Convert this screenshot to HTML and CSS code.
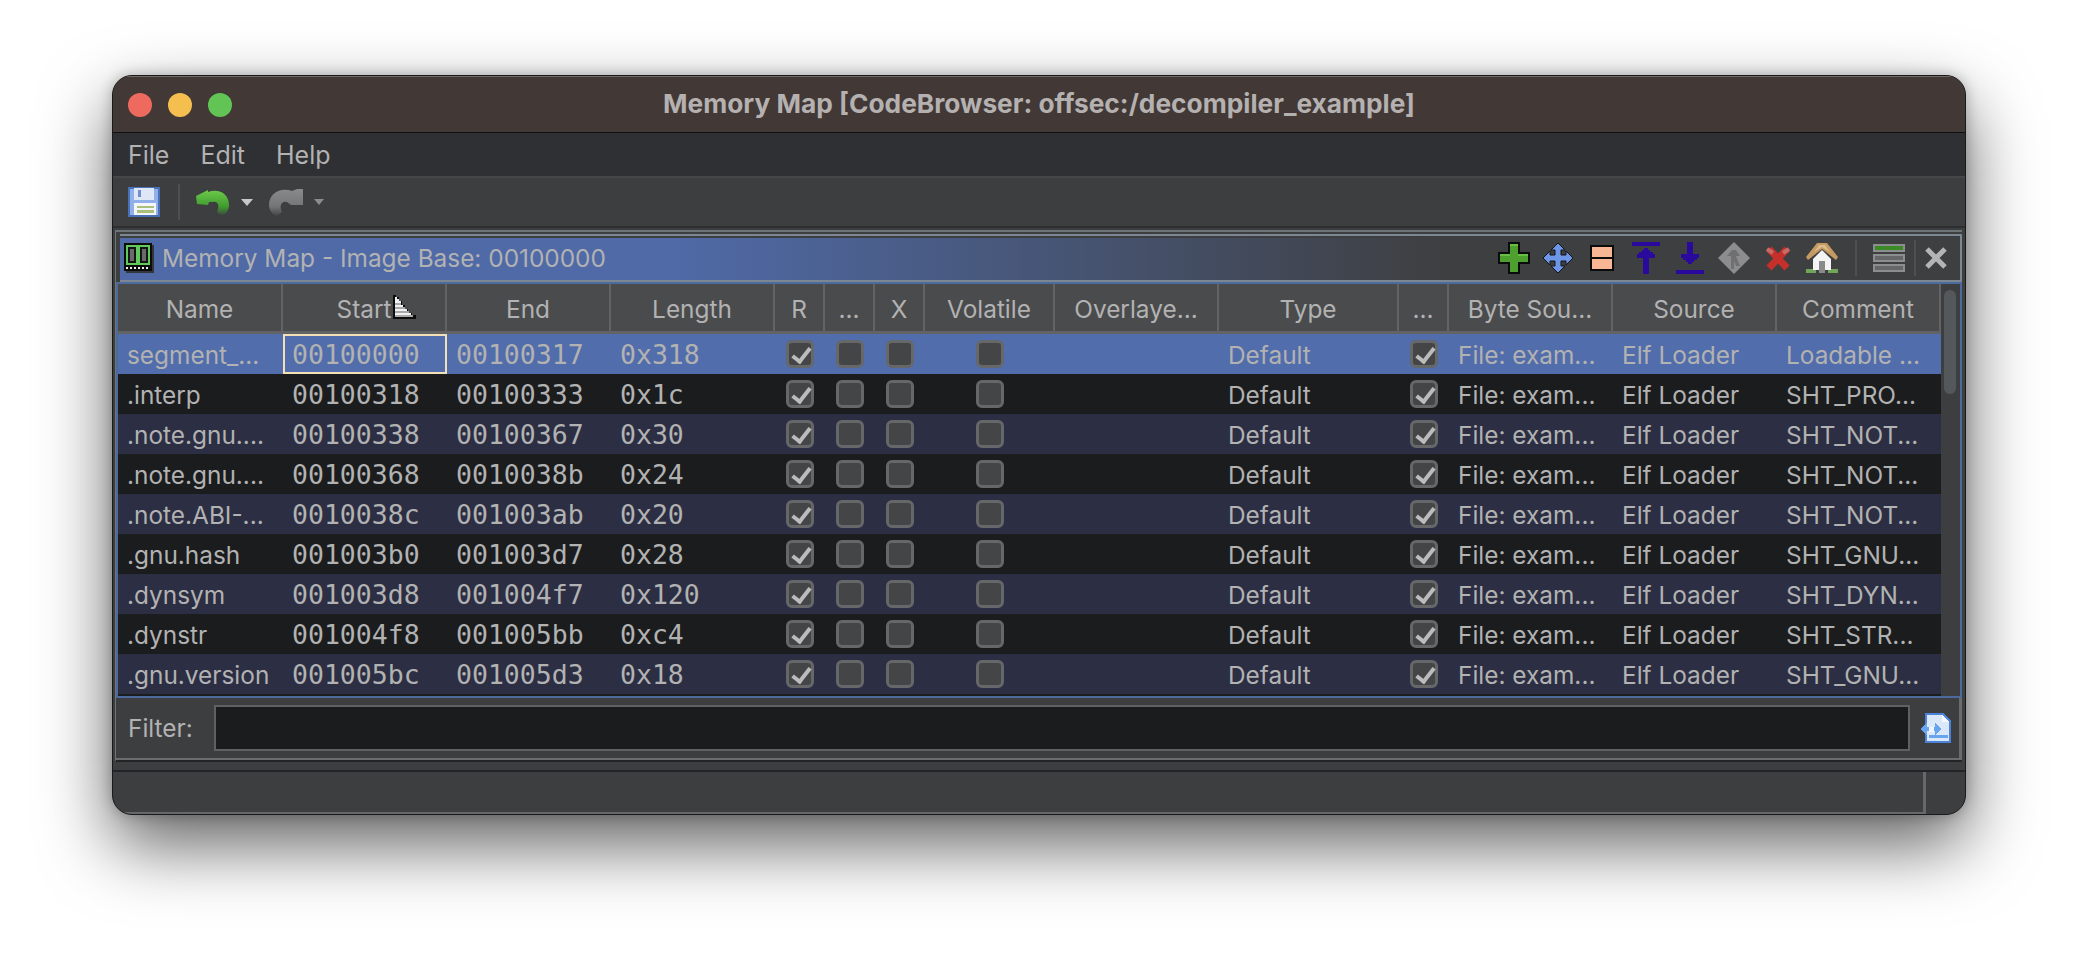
FILE: index.html
```html
<!DOCTYPE html>
<html lang="en">
<head>
    <meta charset="UTF-8">
    <title>Memory Map</title>
    <link rel="stylesheet" href="styles.css">
</head>
<body>

<div class="window">
    <div class="titlebar">
        <div class="lights">
            <span class="light red"></span>
            <span class="light yellow"></span>
            <span class="light green"></span>
        </div>
        <div class="title">Memory Map [CodeBrowser: offsec:/decompiler_example]</div>
    </div>

    <div class="menubar">
        <span>File</span>
        <span>Edit</span>
        <span>Help</span>
    </div>

    <div class="toolbar">
        <svg class="save-icon" width="32" height="30" viewBox="0 0 32 30" shape-rendering="crispEdges">
            <rect width="32" height="30" fill="#4a70b8"/>
            <rect x="2" y="2" width="28" height="26" fill="#8fb0e8"/>
            <rect x="6" y="1" width="20" height="12" fill="#dfe6f6"/>
            <rect x="10" y="3" width="3" height="7" fill="#6f8fce"/>
            <rect x="6" y="16" width="22" height="12" fill="#f4f6fa"/>
            <rect x="9" y="19" width="17" height="2" fill="#a8c07c"/>
            <rect x="9" y="23" width="17" height="3" fill="#a8c07c"/>
        </svg>
        <span class="tool-sep"></span>
        <svg class="undo-icon" width="34" height="28" viewBox="0 0 34 28">
            <defs>
                <linearGradient id="undoFade" x1="0" y1="0" x2="0" y2="1">
                    <stop offset="0" stop-color="#6ccb4a"/>
                    <stop offset="0.65" stop-color="#3f9a2f"/>
                    <stop offset="1" stop-color="#3d3e40"/>
                </linearGradient>
                <linearGradient id="redoFade" x1="0" y1="0" x2="0" y2="1">
                    <stop offset="0" stop-color="#8a8a8b"/>
                    <stop offset="0.65" stop-color="#747576"/>
                    <stop offset="1" stop-color="#434445"/>
                </linearGradient>
            </defs>
            <path d="M0 8 L12 2 L12 4 C22 0 33 5 33 17 C33 22 30 26 26 28 L21 24 C24 18 22 13 17 14 L13 14 L12 17 L1 16 Z" fill="url(#undoFade)"/>
        </svg>
        <span class="drop-arrow"></span>
        <svg class="redo-icon" width="34" height="28" viewBox="0 0 34 28">
            <path d="M34 1 L34 17 L22 17 L18 14 C12 13 10 18 13 24 L8 28 C3 26 0 22 0 17 C0 5 12 -1 23 3 L28 1 Z" fill="url(#redoFade)"/>
        </svg>
        <span class="drop-arrow dim"></span>
    </div>

    <div class="panel">
        <div class="panel-title">
            <svg class="chip-icon" width="30" height="30" viewBox="0 0 30 30" shape-rendering="crispEdges">
                <rect x="2" y="2" width="28" height="28" fill="#33363d"/>
                <rect width="28" height="28" fill="#0c0c0c"/>
                <rect x="2" y="2" width="24" height="20" fill="#62c95c"/>
                <rect x="4" y="4" width="8" height="16" fill="#151515"/>
                <rect x="16" y="4" width="8" height="16" fill="#151515"/>
                <rect x="6" y="6" width="4" height="12" fill="#6a6a6a"/>
                <rect x="18" y="6" width="4" height="12" fill="#6a6a6a"/>
                <path d="M2 24h2v2H2zM6 24h2v2H6zM10 24h2v2h-2zM14 24h2v2h-2zM18 24h2v2h-2zM22 24h2v2h-2z" fill="#eee"/>
            </svg>
            <span class="panel-name">Memory Map - Image Base: 00100000</span>
            <div class="panel-actions">
                <svg class="act" width="32" height="32" viewBox="0 0 16 16" shape-rendering="crispEdges">
                    <path d="M5 0h6v5h5v6h-5v5H5v-5H0V5h5z" fill="#0b0b0b"/>
                    <path d="M6 1h4v5h5v4h-5v5H6v-5H1V6h5z" fill="#4ea02e"/>
                    <path d="M6 1h4v1H6zM1 6h5v1H1zM10 6h5v1h-5z" fill="#68bd45"/>
                </svg>
                <svg class="act" width="32" height="32" viewBox="0 0 32 32">
                    <polygon points="16,1 23,8 19,8 19,13 24,13 24,9 31,16 24,23 24,19 19,19 19,24 23,24 16,31 9,24 13,24 13,19 8,19 8,23 1,16 8,9 8,13 13,13 13,8 9,8" fill="#6e96e6" stroke="#141418" stroke-width="1"/>
                </svg>
                <svg class="act" width="32" height="32" viewBox="0 0 32 32" shape-rendering="crispEdges">
                    <rect x="4" y="3" width="24" height="26" fill="#0b0b0b"/>
                    <rect x="6" y="5" width="20" height="10" fill="#f7b795"/>
                    <rect x="6" y="17" width="20" height="10" fill="#f7b795"/>
                </svg>
                <svg class="act" width="32" height="32" viewBox="0 0 32 32" shape-rendering="crispEdges">
                    <rect x="2" y="0" width="28" height="4" fill="#2a0a9c"/>
                    <path d="M14 6h4v2h2v2h3v2h2v4h-6v16h-6V16H7v-4h2v-2h3V8h2z" fill="#2a0a9c"/>
                </svg>
                <svg class="act" width="32" height="32" viewBox="0 0 32 32" shape-rendering="crispEdges">
                    <rect x="2" y="28" width="28" height="4" fill="#2a0a9c"/>
                    <path d="M13 0h6v12h6v4h-2v2h-3v2h-2v2h-4v-2h-2v-2H9v-2H7v-4h6z" fill="#2a0a9c"/>
                </svg>
                <svg class="act" width="32" height="32" viewBox="0 0 32 32">
                    <path d="M16 0L32 16L16 32L0 16Z" fill="#8d8d8e"/>
                    <path d="M14 8h4l4 6h-4l4 10h-4l-2-5v8h-3V14H9z" fill="#6f7071"/>
                </svg>
                <svg class="act" width="32" height="32" viewBox="0 0 32 32">
                    <path d="M7 7L25 26M25 7L7 26" stroke="#c5302a" stroke-width="7"/>
                    <path d="M5 7L11 11M27 7L21 11" stroke="#c86a66" stroke-width="4"/>
                </svg>
                <svg class="act" width="32" height="32" viewBox="0 0 32 32">
                    <path d="M0 27h10v4H0zM22 27h10v4H22z" fill="#6fa65a"/>
                    <path d="M16 8l9 9v11H7V17z" fill="#f4f4f4"/>
                    <rect x="13" y="19" width="6" height="12" fill="#8a8a8a"/>
                    <path d="M11 1h10l11 14-2 3-14-11L2 18l-2-3z" fill="#c49a62"/>
                    <path d="M13 3h6l5 7-8-5-8 5z" fill="#dcbc8c"/>
                </svg>
                <span class="act-sep"></span>
                <svg class="act-rows" width="32" height="28" viewBox="0 0 32 28" shape-rendering="crispEdges">
                    <rect x="1" y="1" width="30" height="6" fill="#3a8a26" stroke="#8c8d8e" stroke-width="2"/>
                    <rect x="1" y="11" width="30" height="6" fill="#666769" stroke="#8c8d8e" stroke-width="2"/>
                    <rect x="1" y="21" width="30" height="6" fill="#666769" stroke="#8c8d8e" stroke-width="2"/>
                </svg>
                <span class="act-sep second"></span>
                <svg class="act-close" width="22" height="22" viewBox="0 0 22 22">
                    <path d="M2 2L20 20M20 2L2 20" stroke="#b4b4b4" stroke-width="5"/>
                </svg>
            </div>
        </div>

        <div class="table-wrap">
            <div class="table">
                <div class="row head">
                    <div class="cell">Name</div>
                    <div class="cell sorted">Start
                        <svg class="sort-icon" width="24" height="24" viewBox="0 0 24 24" shape-rendering="crispEdges">
                            <path d="M0 0h3v2h3v4h3v4h3v4h3v4h4v2h4v4H0z" fill="#0c0c0c"/>
                            <path d="M2 2h2v2h2v2h2v2H2zM2 10h8v2H2zM2 14h12v2H2zM2 18h16v2H2z" fill="#f2f2f2"/>
                            <path d="M2 8h6v2H2zM2 12h10v2H2zM2 16h14v2H2zM2 20h18v2H2z" fill="#a9a9a9"/>
                        </svg>
                    </div>
                    <div class="cell">End</div>
                    <div class="cell">Length</div>
                    <div class="cell">R</div>
                    <div class="cell">...</div>
                    <div class="cell">X</div>
                    <div class="cell">Volatile</div>
                    <div class="cell">Overlaye...</div>
                    <div class="cell">Type</div>
                    <div class="cell">...</div>
                    <div class="cell">Byte Sou...</div>
                    <div class="cell">Source</div>
                    <div class="cell">Comment</div>
                </div>

                <div class="row selected">
                    <div class="cell">segment_...</div>
                    <div class="cell mono focus">00100000</div>
                    <div class="cell mono">00100317</div>
                    <div class="cell mono">0x318</div>
                    <div class="cell box"><span class="check on"></span></div>
                    <div class="cell box"><span class="check"></span></div>
                    <div class="cell box"><span class="check"></span></div>
                    <div class="cell box"><span class="check"></span></div>
                    <div class="cell"></div>
                    <div class="cell">Default</div>
                    <div class="cell box"><span class="check on"></span></div>
                    <div class="cell">File: exam...</div>
                    <div class="cell">Elf Loader</div>
                    <div class="cell">Loadable ...</div>
                </div>
                <div class="row">
                    <div class="cell">.interp</div>
                    <div class="cell mono">00100318</div>
                    <div class="cell mono">00100333</div>
                    <div class="cell mono">0x1c</div>
                    <div class="cell box"><span class="check on"></span></div>
                    <div class="cell box"><span class="check"></span></div>
                    <div class="cell box"><span class="check"></span></div>
                    <div class="cell box"><span class="check"></span></div>
                    <div class="cell"></div>
                    <div class="cell">Default</div>
                    <div class="cell box"><span class="check on"></span></div>
                    <div class="cell">File: exam...</div>
                    <div class="cell">Elf Loader</div>
                    <div class="cell">SHT_PRO...</div>
                </div>
                <div class="row alt">
                    <div class="cell">.note.gnu....</div>
                    <div class="cell mono">00100338</div>
                    <div class="cell mono">00100367</div>
                    <div class="cell mono">0x30</div>
                    <div class="cell box"><span class="check on"></span></div>
                    <div class="cell box"><span class="check"></span></div>
                    <div class="cell box"><span class="check"></span></div>
                    <div class="cell box"><span class="check"></span></div>
                    <div class="cell"></div>
                    <div class="cell">Default</div>
                    <div class="cell box"><span class="check on"></span></div>
                    <div class="cell">File: exam...</div>
                    <div class="cell">Elf Loader</div>
                    <div class="cell">SHT_NOT...</div>
                </div>
                <div class="row">
                    <div class="cell">.note.gnu....</div>
                    <div class="cell mono">00100368</div>
                    <div class="cell mono">0010038b</div>
                    <div class="cell mono">0x24</div>
                    <div class="cell box"><span class="check on"></span></div>
                    <div class="cell box"><span class="check"></span></div>
                    <div class="cell box"><span class="check"></span></div>
                    <div class="cell box"><span class="check"></span></div>
                    <div class="cell"></div>
                    <div class="cell">Default</div>
                    <div class="cell box"><span class="check on"></span></div>
                    <div class="cell">File: exam...</div>
                    <div class="cell">Elf Loader</div>
                    <div class="cell">SHT_NOT...</div>
                </div>
                <div class="row alt">
                    <div class="cell">.note.ABI-...</div>
                    <div class="cell mono">0010038c</div>
                    <div class="cell mono">001003ab</div>
                    <div class="cell mono">0x20</div>
                    <div class="cell box"><span class="check on"></span></div>
                    <div class="cell box"><span class="check"></span></div>
                    <div class="cell box"><span class="check"></span></div>
                    <div class="cell box"><span class="check"></span></div>
                    <div class="cell"></div>
                    <div class="cell">Default</div>
                    <div class="cell box"><span class="check on"></span></div>
                    <div class="cell">File: exam...</div>
                    <div class="cell">Elf Loader</div>
                    <div class="cell">SHT_NOT...</div>
                </div>
                <div class="row">
                    <div class="cell">.gnu.hash</div>
                    <div class="cell mono">001003b0</div>
                    <div class="cell mono">001003d7</div>
                    <div class="cell mono">0x28</div>
                    <div class="cell box"><span class="check on"></span></div>
                    <div class="cell box"><span class="check"></span></div>
                    <div class="cell box"><span class="check"></span></div>
                    <div class="cell box"><span class="check"></span></div>
                    <div class="cell"></div>
                    <div class="cell">Default</div>
                    <div class="cell box"><span class="check on"></span></div>
                    <div class="cell">File: exam...</div>
                    <div class="cell">Elf Loader</div>
                    <div class="cell">SHT_GNU...</div>
                </div>
                <div class="row alt">
                    <div class="cell">.dynsym</div>
                    <div class="cell mono">001003d8</div>
                    <div class="cell mono">001004f7</div>
                    <div class="cell mono">0x120</div>
                    <div class="cell box"><span class="check on"></span></div>
                    <div class="cell box"><span class="check"></span></div>
                    <div class="cell box"><span class="check"></span></div>
                    <div class="cell box"><span class="check"></span></div>
                    <div class="cell"></div>
                    <div class="cell">Default</div>
                    <div class="cell box"><span class="check on"></span></div>
                    <div class="cell">File: exam...</div>
                    <div class="cell">Elf Loader</div>
                    <div class="cell">SHT_DYN...</div>
                </div>
                <div class="row">
                    <div class="cell">.dynstr</div>
                    <div class="cell mono">001004f8</div>
                    <div class="cell mono">001005bb</div>
                    <div class="cell mono">0xc4</div>
                    <div class="cell box"><span class="check on"></span></div>
                    <div class="cell box"><span class="check"></span></div>
                    <div class="cell box"><span class="check"></span></div>
                    <div class="cell box"><span class="check"></span></div>
                    <div class="cell"></div>
                    <div class="cell">Default</div>
                    <div class="cell box"><span class="check on"></span></div>
                    <div class="cell">File: exam...</div>
                    <div class="cell">Elf Loader</div>
                    <div class="cell">SHT_STR...</div>
                </div>
                <div class="row alt">
                    <div class="cell">.gnu.version</div>
                    <div class="cell mono">001005bc</div>
                    <div class="cell mono">001005d3</div>
                    <div class="cell mono">0x18</div>
                    <div class="cell box"><span class="check on"></span></div>
                    <div class="cell box"><span class="check"></span></div>
                    <div class="cell box"><span class="check"></span></div>
                    <div class="cell box"><span class="check"></span></div>
                    <div class="cell"></div>
                    <div class="cell">Default</div>
                    <div class="cell box"><span class="check on"></span></div>
                    <div class="cell">File: exam...</div>
                    <div class="cell">Elf Loader</div>
                    <div class="cell">SHT_GNU...</div>
                </div>
            </div>
            <div class="scrollbar"><div class="thumb"></div></div>
        </div>

        <div class="filter">
            <label>Filter:</label>
            <div class="filter-input"></div>
            <svg class="filter-icon" width="32" height="32" viewBox="0 0 32 32" shape-rendering="crispEdges">
                <path d="M5 1h18l8 8v22H5z" fill="#4c82d8"/>
                <path d="M7 3h15l7 7v19H7z" fill="#dbe8fa"/>
                <path d="M22 3l7 7h-7z" fill="#f6f9fe"/>
                <rect x="9" y="23" width="19" height="3" fill="#69a4ee"/>
                <path d="M0 17l7-6v4h8v-4l7 6-7 6v-4H7v4z" fill="#69a4ee"/>
                <rect x="9" y="15" width="5" height="5" fill="#eef5ff"/>
            </svg>
        </div>
    </div>

    <div class="statusbar">
        <div class="status-main"></div>
    </div>
</div>

</body>
</html>
```

FILE: styles.css
```css
body {
    margin: 0;
    height: 964px;
    overflow: hidden;
    background-color: #ffffff;
    font-family: Inter, "Liberation Sans", sans-serif;
    font-size: 24.4px;
    color: #b2b2b2;
}

.window {
    width: 1854px;
    height: 740px;
    margin: 75px 0 0 112px;
    display: flex;
    flex-direction: column;
    overflow: hidden;
    border-radius: 20px;
    background-color: #3d3e40;
    box-sizing: border-box;
    border: 1px solid #1a1a1a;
    box-shadow: 0 30px 70px rgba(0, 0, 0, 0.62), 0 0 14px rgba(0, 0, 0, 0.25);
}

.titlebar {
    height: 57px;
    flex: none;
    display: flex;
    align-items: center;
    position: relative;
    background-color: #423836;
    border-top: 1px solid #6f6a68;
    border-bottom: 1px solid #101010;
    box-sizing: border-box;
}
.lights {
    display: flex;
    gap: 16px;
    padding-left: 15px;
}
.light {
    width: 24px;
    height: 24px;
    border-radius: 50%;
}
.red { background-color: #ee6a5f; }
.yellow { background-color: #f5bf4f; }
.green { background-color: #61c454; }
.title {
    position: absolute;
    left: 0;
    right: 0;
    top: 11px;
    text-align: center;
    font-size: 26.3px;
    font-weight: bold;
    color: #b4b1b0;
}

.menubar {
    height: 45px;
    flex: none;
    display: flex;
    align-items: center;
    gap: 31px;
    padding: 1px 0 0 15px;
    font-size: 25px;
    background-color: #2f3033;
    border-bottom: 2px solid #454648;
    box-sizing: border-box;
}

.toolbar {
    height: 50px;
    flex: none;
    display: flex;
    align-items: center;
    padding-left: 15px;
    background-color: #3d3e40;
    border-bottom: 2px solid #2e2f31;
    box-sizing: border-box;
}
.tool-sep {
    width: 2px;
    height: 36px;
    margin: 0 16px 0 18px;
    background-color: #4e4f51;
}
.drop-arrow {
    width: 0;
    height: 0;
    margin: 0 16px 0 11px;
    border-left: 6px solid transparent;
    border-right: 6px solid transparent;
    border-top: 7px solid #c8c8c8;
}
.drop-arrow.dim {
    border-left-width: 5px;
    border-right-width: 5px;
    border-top-width: 6px;
    border-top-color: #8c8c8c;
}

.panel {
    flex: 1;
    display: flex;
    flex-direction: column;
    margin: 2px 3px 0 2px;
    border-top: 2px solid #6d7478;
    border-left: 1px solid #6d7478;
    border-bottom: 2px solid #232427;
    box-sizing: border-box;
}

.panel-title {
    height: 48px;
    flex: none;
    display: flex;
    align-items: center;
    margin: 2px 0 0 4px;
    padding-left: 4px;
    background: linear-gradient(90deg, #4f6aa7 0%, #4f6aa7 30%, #3e3f41 72%);
    border-right: 2px solid #7d8794;
    box-shadow: inset 0 2px 0 #7d8794, inset 0 4px 0 #3d3e40, inset 0 -2px 0 #7d8794;
    box-sizing: border-box;
}
.panel-name {
    margin-left: 8px;
}
.panel-actions {
    margin-left: auto;
    display: flex;
    align-items: center;
    gap: 12px;
    padding-right: 13px;
}
.act-sep {
    width: 2px;
    height: 36px;
    margin: 0 4px 0 5px;
    background-color: #4e4f51;
}
.act-sep.second {
    margin: 0 -3px 0 -3px;
}

.table-wrap {
    display: flex;
    flex: none;
    border: 2px solid #4c6a9c;
    box-sizing: border-box;
}
.table {
    width: 1823px;
    flex: none;
    padding-bottom: 2px;
    background-color: #1b1c1e;
}
.row {
    display: grid;
    grid-template-columns: 165px 164px 164px 164px 50px 50px 50px 130px 164px 180px 50px 164px 164px 164px;
    height: 40px;
    background-color: #1b1c1e;
}
.row.alt {
    background-color: #2c2e43;
}
.row.selected {
    background-color: #526dab;
}
.row.head {
    height: 50px;
    background-color: #4a4b4d;
    border-bottom: 3px solid #626365;
    box-sizing: border-box;
}
.cell {
    display: flex;
    align-items: center;
    padding: 1px 0 0 9px;
    white-space: nowrap;
    overflow: hidden;
    box-sizing: border-box;
}
.head .cell {
    justify-content: center;
    padding: 3px 0 0 0;
    border-right: 2px solid #626365;
}
.head .cell.sorted {
    position: relative;
}
.sort-icon {
    position: absolute;
    left: 110px;
    top: 11px;
}
.mono {
    font-family: "DejaVu Sans Mono", monospace;
    font-size: 26.5px;
}
.focus {
    padding: 0 0 0 7px;
    border: 2px solid #f3e0b6;
}
.box {
    justify-content: center;
    padding: 0;
}
.check {
    width: 28px;
    height: 28px;
    border: 3px solid #666769;
    border-radius: 6px;
    background-color: #444547;
    box-sizing: border-box;
    position: relative;
}
.check.on::after {
    content: "";
    position: absolute;
    left: 7px;
    top: 1px;
    width: 7px;
    height: 15px;
    border-right: 4px solid #bcbcbc;
    border-bottom: 4px solid #bcbcbc;
    transform: rotate(38deg);
}

.scrollbar {
    flex: 1;
    padding: 6px 0 0 3px;
    background-color: #3d3e40;
}
.thumb {
    width: 12px;
    height: 104px;
    border-radius: 6px;
    background-color: #55585b;
}

.filter {
    flex: 1;
    display: flex;
    align-items: center;
    padding-left: 12px;
    border-right: 3px solid #6a6c6e;
    border-bottom: 2px solid #6a6c6e;
    box-sizing: border-box;
}
.filter label {
    width: 86px;
    flex: none;
}
.filter-input {
    width: 1696px;
    height: 46px;
    background-color: #1b1c1e;
    border: 2px solid #5e6062;
    box-sizing: border-box;
}
.filter-icon {
    margin-left: 10px;
}

.statusbar {
    height: 44px;
    flex: none;
    margin-top: 8px;
    border-top: 2px solid #232427;
    box-sizing: border-box;
    display: flex;
}
.status-main {
    width: 1813px;
    border-right: 3px solid #66686a;
    border-bottom: 2px solid #66686a;
    box-sizing: border-box;
}
```
